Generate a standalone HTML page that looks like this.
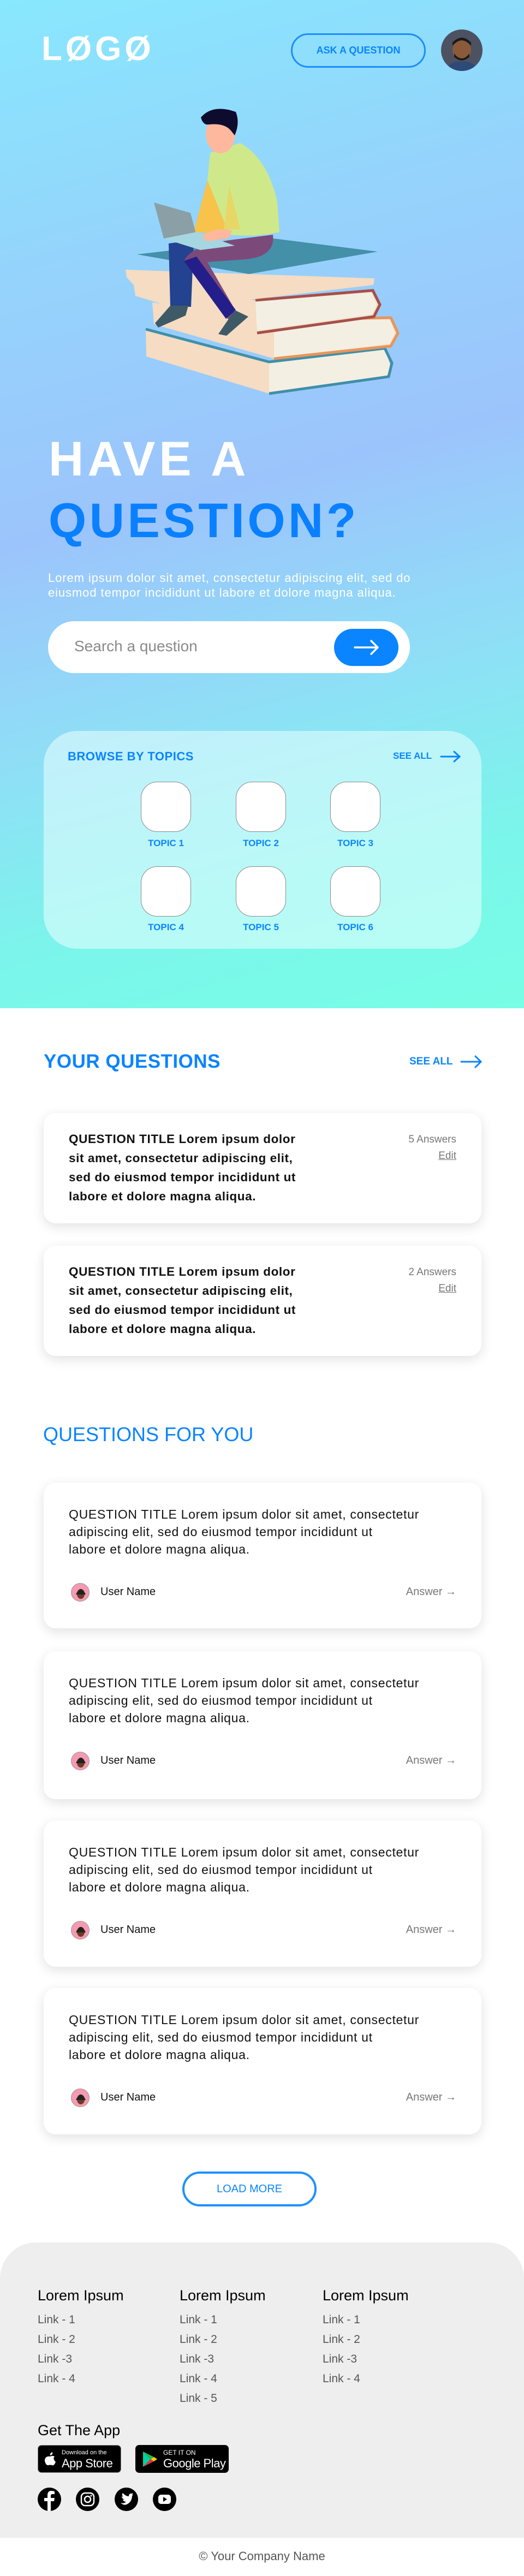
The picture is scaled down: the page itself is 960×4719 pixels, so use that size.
<!DOCTYPE html>
<html><head><meta charset="utf-8">
<style>
*{margin:0;padding:0;box-sizing:border-box}
body{width:960px;height:4719px;position:relative;background:#fff;font-family:"Liberation Sans",sans-serif;overflow:hidden}
.a{position:absolute}
.hero{left:0;top:0;width:960px;height:1847px;background:linear-gradient(165deg,#88e8fd 0%,#95d3fc 25%,#9cc4fc 48%,#8ee0f6 68%,#7af6ea 85%,#78fde6 100%)}
.blue{color:#0a84ff}
.card{background:#fff;border-radius:22px;box-shadow:0 6px 22px rgba(0,0,0,.12);left:80px;width:802px}
.tb{width:92px;height:92px;background:#fff;border:1px solid #8a8a8a;border-radius:30px}
.tl{width:140px;text-align:center;font-size:17px;color:#0a84ff;font-weight:600}
.qt{font-size:22.5px;font-weight:bold;color:#111;line-height:35px;left:46px;top:30px;letter-spacing:0.6px}
.qf{font-size:23px;color:#111;line-height:32px;left:46px;top:42px;letter-spacing:0.7px}
.ans{right:46px;top:34px;font-size:19px;color:#777;text-align:right;line-height:30px}
.user{left:50px;top:184px;width:34px;height:34px;border-radius:50%;background:#f59ab0;border:1px solid #999;overflow:hidden}
.un{left:104px;top:189px;font-size:20px;color:#111}
.aw{right:46px;top:189px;font-size:20px;color:#777}
.fh{font-size:27px;color:#000}
.fl{font-size:21px;color:#555;line-height:36px}
.soc{width:43px;height:43px;border-radius:50%;background:#000;top:4557px}
</style></head><body>
<div class="a hero"></div>

<div class="a" style="left:76px;top:60px;font-size:62px;font-weight:900;color:#fff;letter-spacing:6px;line-height:60px">LØGØ</div>
<div class="a" style="left:533px;top:61px;width:247px;height:63px;border:3px solid #1e8cff;border-radius:32px;text-align:center;line-height:57px;font-size:18px;font-weight:600;color:#0a84ff">ASK A QUESTION</div>
<div class="a" style="left:808px;top:54px;width:76px;height:76px;border-radius:50%;background:#4c5262;overflow:hidden">
<svg width="76" height="76"><ellipse cx="38" cy="72" rx="26" ry="14" fill="#2e4a78"/><ellipse cx="38" cy="38" rx="17" ry="20" fill="#8a5a3a"/><path d="M21 30 Q38 10 55 30 L55 24 Q38 6 21 24Z" fill="#1a1a1a"/><path d="M24 44 Q38 62 52 44 L52 50 Q38 64 24 50Z" fill="#1a1a1a"/></svg></div>

<svg class="a" style="left:0;top:0" width="960" height="760">
<polygon points="267,603 493,663 705,638 716,672 708,692 493,721 268,653" fill="#f5dcc3"/>
<polygon points="493,665 705,640 716,672 708,690 493,718" fill="#f3efe3"/>
<polyline points="267,603 493,663 705,638 718,665 712,690 493,721" fill="none" stroke="#3f8fa8" stroke-width="5"/>
<polygon points="279,554 502,586 716,582 729,610 716,634 502,657 282,594" fill="#f5dcc3"/>
<polygon points="502,588 714,585 724,610 714,630 502,655" fill="#f3efe3"/>
<polyline points="502,586 716,582 729,610 716,634 502,657" fill="none" stroke="#e8955a" stroke-width="5"/>
<polygon points="245,522 468,550 683,532 696,558 685,580 471,610 248,542" fill="#f5dcc3"/>
<polygon points="468,552 681,536 690,558 682,576 471,606" fill="#f3efe3"/>
<polyline points="468,550 683,532 696,558 685,580 471,610" fill="none" stroke="#a64f4a" stroke-width="5"/>
<polygon points="230,494 456,502 686,510 684,522 450,550 245,522 232,508" fill="#f5dcc3"/>
<polygon points="251,466 502,437 692,461 456,502" fill="#4390a8"/>
<path d="M309 446 L355 440 L350 562 L312 562Z" fill="#23428f"/>
<path d="M337 478 Q350 450 420 440 L500 430 Q505 470 450 475 L380 480 L432 570 L418 585Z" fill="#7b4a7a"/>
<path d="M337 478 L360 470 L432 568 L414 584Z" fill="#241e8a"/>
<path d="M312 560 L345 560 L340 578 L290 600 L284 592Z" fill="#3e5a66"/>
<path d="M430 568 L455 580 L415 615 L400 612Z" fill="#3e5a66"/>
<path d="M385 280 L440 262 Q490 290 508 370 L512 425 Q470 435 420 430 L380 330Z" fill="#cfe98a"/>
<path d="M380 330 L420 430 L355 425 Z" fill="#f7c34a"/>
<path d="M420 340 L440 420 L410 420Z" fill="#e6d766"/>
<ellipse cx="404" cy="245" rx="27" ry="36" fill="#fdb89e"/>
<path d="M368 215 Q390 190 432 205 Q440 225 430 248 L422 238 Q410 225 383 228 Q372 230 368 215Z" fill="#0e0c2e"/>
<polygon points="282,371 349,390 367,458 300,437" fill="#8aa0a6"/>
<polygon points="300,437 367,458 430,450 360,425" fill="#a6d6e2"/>
<path d="M370 432 Q395 415 425 422 L420 436 Q398 440 378 442Z" fill="#fdb89e"/>
</svg>

<div class="a" style="left:89px;top:795px;font-size:89px;font-weight:900;color:#fff;line-height:90px;letter-spacing:7px">HAVE A</div>
<div class="a" style="left:89px;top:908px;font-size:89px;font-weight:900;color:#0a80ff;line-height:90px;letter-spacing:5.5px">QUESTION?</div>
<div class="a" style="left:88px;top:1045px;font-size:22px;color:#fff;line-height:27px;letter-spacing:0.9px">Lorem ipsum dolor sit amet, consectetur adipiscing elit, sed do<br>eiusmod tempor incididunt ut labore et dolore magna aliqua.</div>

<div class="a" style="left:88px;top:1138px;width:663px;height:95px;background:#fff;border-radius:48px"></div>
<div class="a" style="left:136px;top:1168px;font-size:28px;color:#8a8a8a">Search a question</div>
<div class="a" style="left:612px;top:1152px;width:118px;height:68px;background:#0a84ff;border-radius:34px">
<svg width="118" height="68"><path d="M38 34 H80 M68 22 L80 34 L68 46" fill="none" stroke="#fff" stroke-width="3.5" stroke-linecap="round" stroke-linejoin="round"/></svg></div>

<div class="a" style="left:80px;top:1339px;width:802px;height:399px;background:rgba(235,255,255,.55);border-radius:62px"></div>
<div class="a blue" style="left:124px;top:1373px;font-size:22px;font-weight:600;letter-spacing:0.5px">BROWSE BY TOPICS</div>
<div class="a blue" style="left:720px;top:1375px;font-size:17px;font-weight:600">SEE ALL</div>
<svg class="a" style="left:806px;top:1374px" width="40" height="24"><path d="M2 12 H36 M26 3 L36 12 L26 21" fill="none" stroke="#0a84ff" stroke-width="3" stroke-linecap="round"/></svg>

<div class="a tb" style="left:258px;top:1432px"></div>
<div class="a tb" style="left:432px;top:1432px"></div>
<div class="a tb" style="left:605px;top:1432px"></div>
<div class="a tl" style="left:234px;top:1535px">TOPIC 1</div>
<div class="a tl" style="left:408px;top:1535px">TOPIC 2</div>
<div class="a tl" style="left:581px;top:1535px">TOPIC 3</div>
<div class="a tb" style="left:258px;top:1587px"></div>
<div class="a tb" style="left:432px;top:1587px"></div>
<div class="a tb" style="left:605px;top:1587px"></div>
<div class="a tl" style="left:234px;top:1689px">TOPIC 4</div>
<div class="a tl" style="left:408px;top:1689px">TOPIC 5</div>
<div class="a tl" style="left:581px;top:1689px">TOPIC 6</div>

<div class="a blue" style="left:80px;top:1925px;font-size:35px;font-weight:600;letter-spacing:0.5px">YOUR QUESTIONS</div>
<div class="a blue" style="left:750px;top:1934px;font-size:19px;font-weight:600">SEE ALL</div>
<svg class="a" style="left:843px;top:1932px" width="42" height="26"><path d="M2 13 H38 M28 3 L38 13 L28 23" fill="none" stroke="#0a84ff" stroke-width="3" stroke-linecap="round"/></svg>

<div class="a card" style="top:2039px;height:202px">
<div class="a qt">QUESTION TITLE Lorem ipsum dolor<br>sit amet, consectetur adipiscing elit,<br>sed do eiusmod tempor incididunt ut<br>labore et dolore magna aliqua.</div>
<div class="a ans">5 Answers<br><u>Edit</u></div></div>
<div class="a card" style="top:2282px;height:202px">
<div class="a qt">QUESTION TITLE Lorem ipsum dolor<br>sit amet, consectetur adipiscing elit,<br>sed do eiusmod tempor incididunt ut<br>labore et dolore magna aliqua.</div>
<div class="a ans">2 Answers<br><u>Edit</u></div></div>

<div class="a blue" style="left:79px;top:2607px;font-size:36px">QUESTIONS FOR YOU</div>

<div class="a card" style="top:2716px;height:267px">
<div class="a qf">QUESTION TITLE Lorem ipsum dolor sit amet, consectetur<br>adipiscing elit, sed do eiusmod tempor incididunt ut<br>labore et dolore magna aliqua.</div>
<div class="a user"><svg width="34" height="34"><ellipse cx="17" cy="19" rx="7" ry="9" fill="#6b3a25"/><path d="M8 20 Q17 0 26 20" fill="#222"/></svg></div><div class="a un">User Name</div><div class="a aw">Answer →</div></div>
<div class="a card" style="top:3025px;height:271px">
<div class="a qf">QUESTION TITLE Lorem ipsum dolor sit amet, consectetur<br>adipiscing elit, sed do eiusmod tempor incididunt ut<br>labore et dolore magna aliqua.</div>
<div class="a user"><svg width="34" height="34"><ellipse cx="17" cy="19" rx="7" ry="9" fill="#6b3a25"/><path d="M8 20 Q17 0 26 20" fill="#222"/></svg></div><div class="a un">User Name</div><div class="a aw">Answer →</div></div>
<div class="a card" style="top:3335px;height:268px">
<div class="a qf">QUESTION TITLE Lorem ipsum dolor sit amet, consectetur<br>adipiscing elit, sed do eiusmod tempor incididunt ut<br>labore et dolore magna aliqua.</div>
<div class="a user"><svg width="34" height="34"><ellipse cx="17" cy="19" rx="7" ry="9" fill="#6b3a25"/><path d="M8 20 Q17 0 26 20" fill="#222"/></svg></div><div class="a un">User Name</div><div class="a aw">Answer →</div></div>
<div class="a card" style="top:3642px;height:268px">
<div class="a qf">QUESTION TITLE Lorem ipsum dolor sit amet, consectetur<br>adipiscing elit, sed do eiusmod tempor incididunt ut<br>labore et dolore magna aliqua.</div>
<div class="a user"><svg width="34" height="34"><ellipse cx="17" cy="19" rx="7" ry="9" fill="#6b3a25"/><path d="M8 20 Q17 0 26 20" fill="#222"/></svg></div><div class="a un">User Name</div><div class="a aw">Answer →</div></div>

<div class="a" style="left:334px;top:3978px;width:246px;height:64px;border:4px solid #1e90ff;border-radius:32px;text-align:center;line-height:56px;font-size:20px;color:#0a84ff">LOAD MORE</div>

<div class="a" style="left:0;top:4108px;width:960px;height:541px;background:#eeeeee;border-radius:66px 66px 0 0"></div>
<div class="a fh" style="left:69px;top:4190px">Lorem Ipsum</div>
<div class="a fh" style="left:329px;top:4190px">Lorem Ipsum</div>
<div class="a fh" style="left:591px;top:4190px">Lorem Ipsum</div>
<div class="a fl" style="left:69px;top:4232px">Link - 1<br>Link - 2<br>Link -3<br>Link - 4</div>
<div class="a fl" style="left:329px;top:4232px">Link - 1<br>Link - 2<br>Link -3<br>Link - 4<br>Link - 5</div>
<div class="a fl" style="left:591px;top:4232px">Link - 1<br>Link - 2<br>Link -3<br>Link - 4</div>
<div class="a fh" style="left:69px;top:4437px">Get The App</div>

<div class="a" style="left:69px;top:4479px;width:153px;height:51px;background:#000;border-radius:7px;border:1px solid #888;color:#fff">
<svg class="a" style="left:10px;top:10px" width="24" height="30"><path d="M16 2 Q17 7 12 8 Q11 4 16 2Z M12 10 Q16 8 20 10 Q16 14 22 20 Q19 28 15 26 Q12 25 9 26 Q4 27 2 18 Q2 9 12 10Z" fill="#fff"/></svg>
<div class="a" style="left:43px;top:7px;font-size:11px">Download on the</div>
<div class="a" style="left:43px;top:20px;font-size:22px;letter-spacing:-0.5px">App Store</div></div>
<div class="a" style="left:248px;top:4479px;width:171px;height:51px;background:#000;border-radius:7px;color:#fff">
<svg class="a" style="left:12px;top:11px" width="30" height="30"><polygon points="2,1 16,15 2,29" fill="#00d3a0"/><polygon points="2,1 22,11 16,15" fill="#28b34b"/><polygon points="16,15 22,11 28,15 22,19" fill="#ffce00"/><polygon points="2,29 16,15 22,19" fill="#e8304f"/></svg>
<div class="a" style="left:51px;top:7px;font-size:12px">GET IT ON</div>
<div class="a" style="left:51px;top:21px;font-size:22px;letter-spacing:-0.5px">Google Play</div></div>

<div class="a soc" style="left:69px"><svg width="43" height="43"><path d="M24 43 V25 H30 L31 19 H24 V15 Q24 12 27 12 H31 V7 Q28 6 25 6 Q18 6 18 14 V19 H12 V25 H18 V43Z" fill="#fff"/></svg></div>
<div class="a soc" style="left:139px"><svg width="43" height="43"><rect x="10" y="10" width="23" height="23" rx="7" fill="none" stroke="#fff" stroke-width="2.5"/><circle cx="21.5" cy="21.5" r="5.5" fill="none" stroke="#fff" stroke-width="2.5"/><circle cx="28" cy="15" r="1.5" fill="#fff"/></svg></div>
<div class="a soc" style="left:210px"><svg width="43" height="43"><path d="M11 28 Q17 30 21 26 Q16 26 15 22 L18 22 Q13 20 13 16 L16 17 Q12 13 15 10 Q20 16 26 16 Q26 10 31 11 L34 10 L32 13 L34 13 L32 15 Q32 26 22 31 Q16 33 11 28Z" fill="#fff"/></svg></div>
<div class="a soc" style="left:280px"><svg width="43" height="43"><rect x="10" y="13" width="23" height="17" rx="5" fill="#fff"/><polygon points="19,17 26,21.5 19,26" fill="#000"/></svg></div>

<div class="a" style="left:0;top:4670px;width:960px;text-align:center;font-size:22px;color:#555">© Your Company Name</div>
</body></html>
